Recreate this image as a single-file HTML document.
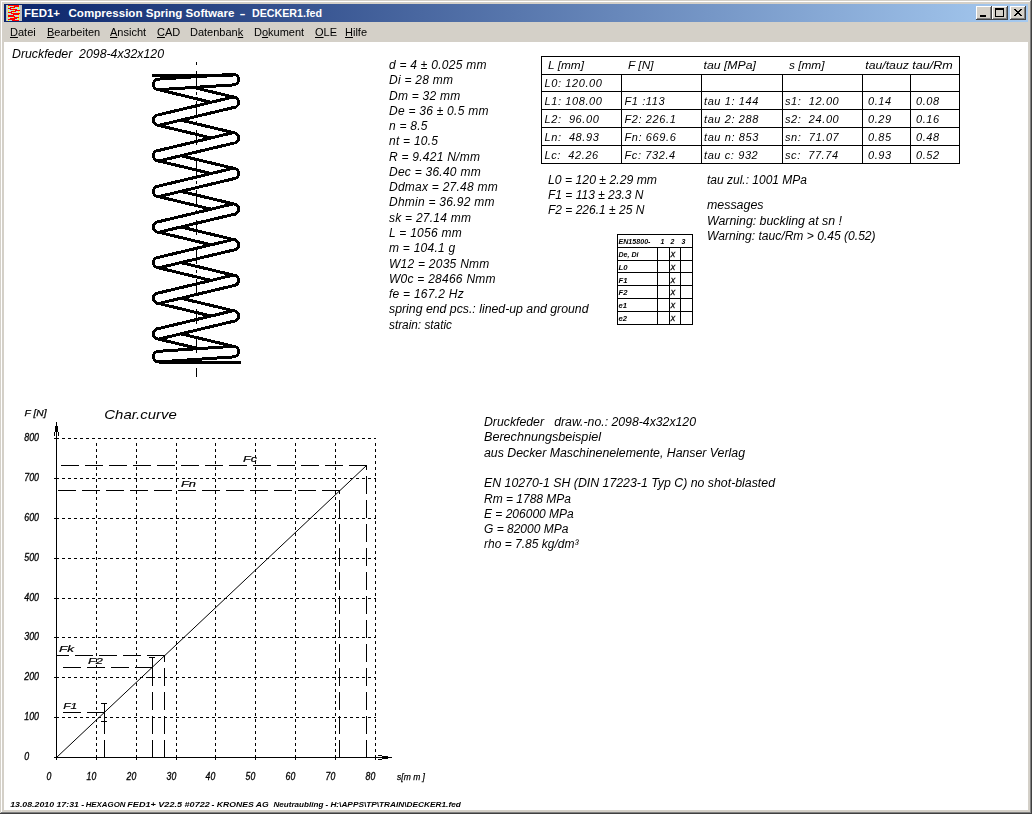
<!DOCTYPE html>
<html><head><meta charset="utf-8"><style>
html,body{margin:0;padding:0;width:1032px;height:814px;overflow:hidden;background:#d4d0c8;}
#win{position:absolute;left:0;top:0;width:1032px;height:814px;background:#d4d0c8;}
.f{position:absolute;}
#title{position:absolute;left:4px;top:4px;width:1024px;height:18px;background:linear-gradient(to right,#0a246a,#a6caf0);}
#ttext{position:absolute;left:24px;top:3px;font:bold 11px "Liberation Sans", sans-serif;color:#fff;white-space:pre;line-height:13px;letter-spacing:0.15px}
.btn{position:absolute;top:2px;width:16px;height:14px;background:#d4d0c8;box-sizing:border-box;
 box-shadow: inset -1px -1px #404040, inset 1px 1px #ffffff, inset -2px -2px #808080, inset 2px 2px #d4d0c8;}
#menu{position:absolute;left:4px;top:22px;width:1024px;height:20px;font:11px "Liberation Sans", sans-serif;color:#000;}
#menu span{position:absolute;top:4px;white-space:pre;line-height:13px;will-change:transform}
#menu u{text-decoration:underline;text-underline-offset:1px;}
#client{position:absolute;left:4px;top:42px;width:1024px;height:768px;background:#fff;}
#main text{font-family:"Liberation Sans", sans-serif;fill:#000;}
</style></head><body><div id="win">
<div class="f" style="left:0;top:0;width:1032px;height:1px;background:#d4d0c8"></div>
<div class="f" style="left:1px;top:1px;width:1030px;height:1px;background:#fff"></div>
<div class="f" style="left:1px;top:1px;width:1px;height:812px;background:#fff"></div>
<div class="f" style="left:1030px;top:1px;width:1px;height:812px;background:#808080"></div>
<div class="f" style="left:1031px;top:0;width:1px;height:814px;background:#404040"></div>
<div class="f" style="left:1px;top:812px;width:1030px;height:1px;background:#808080"></div>
<div class="f" style="left:0;top:813px;width:1032px;height:1px;background:#404040"></div>
<div id="title">
<svg width="16" height="16" viewBox="0 0 16 16" style="position:absolute;left:2px;top:1px" shape-rendering="crispEdges"><rect width="16" height="16" fill="#c0c0c0"/><rect x="1" width="1" height="16" fill="#c4d0d4"/><rect x="13" width="1" height="16" fill="#c4d0d4"/><rect x="2" y="0" width="11" height="1" fill="#ff0000"/><rect x="2" y="1" width="1" height="1" fill="#ffff00"/><rect x="3" y="1" width="4" height="1" fill="#b8dcdc"/><rect x="7" y="1" width="1" height="1" fill="#ffff00"/><rect x="8" y="1" width="5" height="1" fill="#ff0000"/><rect x="2" y="2" width="1" height="1" fill="#ffff00"/><rect x="3" y="2" width="1" height="1" fill="#b8dcdc"/><rect x="4" y="2" width="5" height="1" fill="#ff0000"/><rect x="9" y="2" width="3" height="1" fill="#b8dcdc"/><rect x="12" y="2" width="1" height="1" fill="#ffff00"/><rect x="2" y="3" width="3" height="1" fill="#ff0000"/><rect x="5" y="3" width="2" height="1" fill="#b8dcdc"/><rect x="7" y="3" width="1" height="1" fill="#ffff00"/><rect x="8" y="3" width="4" height="1" fill="#b8dcdc"/><rect x="12" y="3" width="1" height="1" fill="#ffff00"/><rect x="2" y="4" width="2" height="1" fill="#b8dcdc"/><rect x="4" y="4" width="7" height="1" fill="#ff0000"/><rect x="11" y="4" width="2" height="1" fill="#b8dcdc"/><rect x="2" y="5" width="1" height="1" fill="#ffff00"/><rect x="3" y="5" width="4" height="1" fill="#b8dcdc"/><rect x="7" y="5" width="1" height="1" fill="#ffff00"/><rect x="8" y="5" width="1" height="1" fill="#b8dcdc"/><rect x="9" y="5" width="5" height="1" fill="#ff0000"/><rect x="2" y="6" width="1" height="1" fill="#ffff00"/><rect x="3" y="6" width="2" height="1" fill="#b8dcdc"/><rect x="5" y="6" width="5" height="1" fill="#ff0000"/><rect x="10" y="6" width="2" height="1" fill="#b8dcdc"/><rect x="12" y="6" width="1" height="1" fill="#ffff00"/><rect x="2" y="7" width="4" height="1" fill="#ff0000"/><rect x="6" y="7" width="1" height="1" fill="#b8dcdc"/><rect x="7" y="7" width="1" height="1" fill="#ffff00"/><rect x="8" y="7" width="4" height="1" fill="#b8dcdc"/><rect x="12" y="7" width="1" height="1" fill="#ffff00"/><rect x="2" y="8" width="3" height="1" fill="#b8dcdc"/><rect x="5" y="8" width="9" height="1" fill="#ff0000"/><rect x="2" y="9" width="1" height="1" fill="#ffff00"/><rect x="3" y="9" width="4" height="1" fill="#b8dcdc"/><rect x="7" y="9" width="6" height="1" fill="#ff0000"/><rect x="2" y="10" width="6" height="1" fill="#ff0000"/><rect x="8" y="10" width="4" height="1" fill="#b8dcdc"/><rect x="12" y="10" width="1" height="1" fill="#ffff00"/><rect x="2" y="11" width="7" height="1" fill="#ff0000"/><rect x="9" y="11" width="3" height="1" fill="#b8dcdc"/><rect x="12" y="11" width="1" height="1" fill="#ffff00"/><rect x="2" y="12" width="1" height="1" fill="#ffff00"/><rect x="3" y="12" width="4" height="1" fill="#b8dcdc"/><rect x="7" y="12" width="1" height="1" fill="#ffff00"/><rect x="8" y="12" width="5" height="1" fill="#ff0000"/><rect x="2" y="13" width="2" height="1" fill="#b8dcdc"/><rect x="4" y="13" width="7" height="1" fill="#ff0000"/><rect x="11" y="13" width="1" height="1" fill="#b8dcdc"/><rect x="12" y="13" width="1" height="1" fill="#ffff00"/><rect x="2" y="14" width="7" height="1" fill="#ff0000"/><rect x="9" y="14" width="3" height="1" fill="#b8dcdc"/><rect x="12" y="14" width="1" height="1" fill="#ffff00"/><rect x="2" y="15" width="1" height="1" fill="#ffff00"/><rect x="3" y="15" width="3" height="1" fill="#b8dcdc"/><rect x="6" y="15" width="7" height="1" fill="#ff0000"/></svg>
<svg width="1024" height="18" style="position:absolute;left:0;top:0"><g font-family='"Liberation Sans", sans-serif' font-weight="bold" font-size="11" fill="#fff">
<text x="20" y="13" textLength="36" lengthAdjust="spacingAndGlyphs">FED1+</text>
<text x="64.5" y="13" textLength="166" lengthAdjust="spacingAndGlyphs">Compression Spring Software</text>
<text x="235.5" y="13" textLength="6" lengthAdjust="spacingAndGlyphs">-</text>
<text x="248" y="13" textLength="70" lengthAdjust="spacingAndGlyphs">DECKER1.fed</text></g></svg>
<div class="btn" style="left:972px"><div style="position:absolute;left:4px;top:9px;width:6px;height:2px;background:#000"></div></div>
<div class="btn" style="left:988px"><div style="position:absolute;left:3px;top:2px;width:9px;height:9px;box-sizing:border-box;border:1px solid #000;border-top-width:2px"></div></div>
<div class="btn" style="left:1006px"><svg width="16" height="14" style="position:absolute;left:0;top:0" shape-rendering="crispEdges"><path d="M4,3h2v1h1v1h2v-1h1v-1h2v1h-1v1h-1v1h-1v1h1v1h1v1h1v1h-2v-1h-1v-1h-2v1h-1v1h-2v-1h1v-1h1v-1h1v-1h-1v-1h-1v-1h-1z" fill="#000"/></svg></div>
</div>
<div id="menu">
<span style="left:6px"><u>D</u>atei</span>
<span style="left:43px"><u>B</u>earbeiten</span>
<span style="left:106px"><u>A</u>nsicht</span>
<span style="left:153px"><u>C</u>AD</span>
<span style="left:186px">Datenban<u>k</u></span>
<span style="left:250px">D<u>o</u>kument</span>
<span style="left:311px"><u>O</u>LE</span>
<span style="left:341px"><u>H</u>ilfe</span>
</div>
<div id="client"></div>
<svg id="main" width="1032" height="814" style="position:absolute;left:0;top:0;will-change:transform">
<path d="M158.70,79.10L233.30,97.00M158.70,89.70L233.30,107.60M158.70,114.81L233.30,132.62M158.70,125.41L233.30,143.22M158.70,150.43L233.30,168.24M158.70,161.03L233.30,178.84M158.70,186.05L233.30,203.86M158.70,196.65L233.30,214.46M158.70,221.67L233.30,239.48M158.70,232.27L233.30,250.08M158.70,257.29L233.30,275.10M158.70,267.89L233.30,285.70M158.70,292.91L233.30,310.72M158.70,303.51L233.30,321.32M158.70,328.53L233.30,346.30M158.70,339.13L233.30,356.90" fill="none" stroke="#000" stroke-width="3.0" shape-rendering="crispEdges"/>
<path d="M233.30,74.30L158.70,79.10L158.70,89.70L233.30,84.90Z" fill="#fff" shape-rendering="crispEdges"/>
<path d="M233.30,74.30L158.70,79.10M233.30,84.90L158.70,89.70" fill="none" stroke="#000" stroke-width="3.0" shape-rendering="crispEdges"/>
<path d="M233.30,97.00L158.70,114.81L158.70,125.41L233.30,107.60Z" fill="#fff" shape-rendering="crispEdges"/>
<path d="M233.30,97.00L158.70,114.81M233.30,107.60L158.70,125.41" fill="none" stroke="#000" stroke-width="3.0" shape-rendering="crispEdges"/>
<path d="M233.30,132.62L158.70,150.43L158.70,161.03L233.30,143.22Z" fill="#fff" shape-rendering="crispEdges"/>
<path d="M233.30,132.62L158.70,150.43M233.30,143.22L158.70,161.03" fill="none" stroke="#000" stroke-width="3.0" shape-rendering="crispEdges"/>
<path d="M233.30,168.24L158.70,186.05L158.70,196.65L233.30,178.84Z" fill="#fff" shape-rendering="crispEdges"/>
<path d="M233.30,168.24L158.70,186.05M233.30,178.84L158.70,196.65" fill="none" stroke="#000" stroke-width="3.0" shape-rendering="crispEdges"/>
<path d="M233.30,203.86L158.70,221.67L158.70,232.27L233.30,214.46Z" fill="#fff" shape-rendering="crispEdges"/>
<path d="M233.30,203.86L158.70,221.67M233.30,214.46L158.70,232.27" fill="none" stroke="#000" stroke-width="3.0" shape-rendering="crispEdges"/>
<path d="M233.30,239.48L158.70,257.29L158.70,267.89L233.30,250.08Z" fill="#fff" shape-rendering="crispEdges"/>
<path d="M233.30,239.48L158.70,257.29M233.30,250.08L158.70,267.89" fill="none" stroke="#000" stroke-width="3.0" shape-rendering="crispEdges"/>
<path d="M233.30,275.10L158.70,292.91L158.70,303.51L233.30,285.70Z" fill="#fff" shape-rendering="crispEdges"/>
<path d="M233.30,275.10L158.70,292.91M233.30,285.70L158.70,303.51" fill="none" stroke="#000" stroke-width="3.0" shape-rendering="crispEdges"/>
<path d="M233.30,310.72L158.70,328.53L158.70,339.13L233.30,321.32Z" fill="#fff" shape-rendering="crispEdges"/>
<path d="M233.30,310.72L158.70,328.53M233.30,321.32L158.70,339.13" fill="none" stroke="#000" stroke-width="3.0" shape-rendering="crispEdges"/>
<path d="M233.30,346.30L158.70,351.30L158.70,361.90L233.30,356.90Z" fill="#fff" shape-rendering="crispEdges"/>
<path d="M233.30,346.30L158.70,351.30M233.30,356.90L158.70,361.90" fill="none" stroke="#000" stroke-width="3.0" shape-rendering="crispEdges"/>
<path d="M233.30,74.30A5.3,5.3 0 0 1 233.30,84.90M158.70,79.10A5.3,5.3 0 0 0 158.70,89.70M233.30,97.00A5.3,5.3 0 0 1 233.30,107.60M158.70,114.81A5.3,5.3 0 0 0 158.70,125.41M233.30,132.62A5.3,5.3 0 0 1 233.30,143.22M158.70,150.43A5.3,5.3 0 0 0 158.70,161.03M233.30,168.24A5.3,5.3 0 0 1 233.30,178.84M158.70,186.05A5.3,5.3 0 0 0 158.70,196.65M233.30,203.86A5.3,5.3 0 0 1 233.30,214.46M158.70,221.67A5.3,5.3 0 0 0 158.70,232.27M233.30,239.48A5.3,5.3 0 0 1 233.30,250.08M158.70,257.29A5.3,5.3 0 0 0 158.70,267.89M233.30,275.10A5.3,5.3 0 0 1 233.30,285.70M158.70,292.91A5.3,5.3 0 0 0 158.70,303.51M233.30,310.72A5.3,5.3 0 0 1 233.30,321.32M158.70,328.53A5.3,5.3 0 0 0 158.70,339.13M233.30,346.30A5.3,5.3 0 0 1 233.30,356.90M158.70,351.30A5.3,5.3 0 0 0 158.70,361.90" fill="none" stroke="#000" stroke-width="3.0" shape-rendering="crispEdges"/>
<path d="M152,75.4H233.30 M158.70,362.0H241" fill="none" stroke="#000" stroke-width="3.0" shape-rendering="crispEdges"/>
<path d="M196.5,62V65 M196.5,71V86 M196.5,92V95 M196.5,101V116 M196.5,121V124 M196.5,130V145 M196.5,151V154 M196.5,160V175 M196.5,181V184 M196.5,190V205 M196.5,210V213 M196.5,220V235 M196.5,240V243 M196.5,249V264 M196.5,270V273 M196.5,279V294 M196.5,300V303 M196.5,309V324 M196.5,329V332 M196.5,338V353 M196.5,359V362 M196.5,368V377" stroke="#000" stroke-width="1" fill="none"/>
<path d="M56,717.5h3 M62,717.5h3 M68,717.5h3 M74,717.5h3 M80,717.5h3 M86,717.5h3 M92,717.5h3 M98,717.5h3 M104,717.5h3 M110,717.5h3 M116,717.5h3 M122,717.5h3 M128,717.5h3 M134,717.5h3 M140,717.5h3 M146,717.5h3 M152,717.5h3 M158,717.5h3 M164,717.5h3 M170,717.5h3 M176,717.5h3 M182,717.5h3 M188,717.5h3 M194,717.5h3 M200,717.5h3 M206,717.5h3 M212,717.5h3 M218,717.5h3 M224,717.5h3 M230,717.5h3 M236,717.5h3 M242,717.5h3 M248,717.5h3 M254,717.5h3 M260,717.5h3 M266,717.5h3 M272,717.5h3 M278,717.5h3 M284,717.5h3 M290,717.5h3 M296,717.5h3 M302,717.5h3 M308,717.5h3 M314,717.5h3 M320,717.5h3 M326,717.5h3 M332,717.5h3 M338,717.5h3 M344,717.5h3 M350,717.5h3 M356,717.5h3 M362,717.5h3 M368,717.5h3 M374,717.5h2 M54,717.5h2 M56,677.5h3 M62,677.5h3 M68,677.5h3 M74,677.5h3 M80,677.5h3 M86,677.5h3 M92,677.5h3 M98,677.5h3 M104,677.5h3 M110,677.5h3 M116,677.5h3 M122,677.5h3 M128,677.5h3 M134,677.5h3 M140,677.5h3 M146,677.5h3 M152,677.5h3 M158,677.5h3 M164,677.5h3 M170,677.5h3 M176,677.5h3 M182,677.5h3 M188,677.5h3 M194,677.5h3 M200,677.5h3 M206,677.5h3 M212,677.5h3 M218,677.5h3 M224,677.5h3 M230,677.5h3 M236,677.5h3 M242,677.5h3 M248,677.5h3 M254,677.5h3 M260,677.5h3 M266,677.5h3 M272,677.5h3 M278,677.5h3 M284,677.5h3 M290,677.5h3 M296,677.5h3 M302,677.5h3 M308,677.5h3 M314,677.5h3 M320,677.5h3 M326,677.5h3 M332,677.5h3 M338,677.5h3 M344,677.5h3 M350,677.5h3 M356,677.5h3 M362,677.5h3 M368,677.5h3 M374,677.5h2 M54,677.5h2 M56,637.5h3 M62,637.5h3 M68,637.5h3 M74,637.5h3 M80,637.5h3 M86,637.5h3 M92,637.5h3 M98,637.5h3 M104,637.5h3 M110,637.5h3 M116,637.5h3 M122,637.5h3 M128,637.5h3 M134,637.5h3 M140,637.5h3 M146,637.5h3 M152,637.5h3 M158,637.5h3 M164,637.5h3 M170,637.5h3 M176,637.5h3 M182,637.5h3 M188,637.5h3 M194,637.5h3 M200,637.5h3 M206,637.5h3 M212,637.5h3 M218,637.5h3 M224,637.5h3 M230,637.5h3 M236,637.5h3 M242,637.5h3 M248,637.5h3 M254,637.5h3 M260,637.5h3 M266,637.5h3 M272,637.5h3 M278,637.5h3 M284,637.5h3 M290,637.5h3 M296,637.5h3 M302,637.5h3 M308,637.5h3 M314,637.5h3 M320,637.5h3 M326,637.5h3 M332,637.5h3 M338,637.5h3 M344,637.5h3 M350,637.5h3 M356,637.5h3 M362,637.5h3 M368,637.5h3 M374,637.5h2 M54,637.5h2 M56,598.5h3 M62,598.5h3 M68,598.5h3 M74,598.5h3 M80,598.5h3 M86,598.5h3 M92,598.5h3 M98,598.5h3 M104,598.5h3 M110,598.5h3 M116,598.5h3 M122,598.5h3 M128,598.5h3 M134,598.5h3 M140,598.5h3 M146,598.5h3 M152,598.5h3 M158,598.5h3 M164,598.5h3 M170,598.5h3 M176,598.5h3 M182,598.5h3 M188,598.5h3 M194,598.5h3 M200,598.5h3 M206,598.5h3 M212,598.5h3 M218,598.5h3 M224,598.5h3 M230,598.5h3 M236,598.5h3 M242,598.5h3 M248,598.5h3 M254,598.5h3 M260,598.5h3 M266,598.5h3 M272,598.5h3 M278,598.5h3 M284,598.5h3 M290,598.5h3 M296,598.5h3 M302,598.5h3 M308,598.5h3 M314,598.5h3 M320,598.5h3 M326,598.5h3 M332,598.5h3 M338,598.5h3 M344,598.5h3 M350,598.5h3 M356,598.5h3 M362,598.5h3 M368,598.5h3 M374,598.5h2 M54,598.5h2 M56,558.5h3 M62,558.5h3 M68,558.5h3 M74,558.5h3 M80,558.5h3 M86,558.5h3 M92,558.5h3 M98,558.5h3 M104,558.5h3 M110,558.5h3 M116,558.5h3 M122,558.5h3 M128,558.5h3 M134,558.5h3 M140,558.5h3 M146,558.5h3 M152,558.5h3 M158,558.5h3 M164,558.5h3 M170,558.5h3 M176,558.5h3 M182,558.5h3 M188,558.5h3 M194,558.5h3 M200,558.5h3 M206,558.5h3 M212,558.5h3 M218,558.5h3 M224,558.5h3 M230,558.5h3 M236,558.5h3 M242,558.5h3 M248,558.5h3 M254,558.5h3 M260,558.5h3 M266,558.5h3 M272,558.5h3 M278,558.5h3 M284,558.5h3 M290,558.5h3 M296,558.5h3 M302,558.5h3 M308,558.5h3 M314,558.5h3 M320,558.5h3 M326,558.5h3 M332,558.5h3 M338,558.5h3 M344,558.5h3 M350,558.5h3 M356,558.5h3 M362,558.5h3 M368,558.5h3 M374,558.5h2 M54,558.5h2 M56,518.5h3 M62,518.5h3 M68,518.5h3 M74,518.5h3 M80,518.5h3 M86,518.5h3 M92,518.5h3 M98,518.5h3 M104,518.5h3 M110,518.5h3 M116,518.5h3 M122,518.5h3 M128,518.5h3 M134,518.5h3 M140,518.5h3 M146,518.5h3 M152,518.5h3 M158,518.5h3 M164,518.5h3 M170,518.5h3 M176,518.5h3 M182,518.5h3 M188,518.5h3 M194,518.5h3 M200,518.5h3 M206,518.5h3 M212,518.5h3 M218,518.5h3 M224,518.5h3 M230,518.5h3 M236,518.5h3 M242,518.5h3 M248,518.5h3 M254,518.5h3 M260,518.5h3 M266,518.5h3 M272,518.5h3 M278,518.5h3 M284,518.5h3 M290,518.5h3 M296,518.5h3 M302,518.5h3 M308,518.5h3 M314,518.5h3 M320,518.5h3 M326,518.5h3 M332,518.5h3 M338,518.5h3 M344,518.5h3 M350,518.5h3 M356,518.5h3 M362,518.5h3 M368,518.5h3 M374,518.5h2 M54,518.5h2 M56,478.5h3 M62,478.5h3 M68,478.5h3 M74,478.5h3 M80,478.5h3 M86,478.5h3 M92,478.5h3 M98,478.5h3 M104,478.5h3 M110,478.5h3 M116,478.5h3 M122,478.5h3 M128,478.5h3 M134,478.5h3 M140,478.5h3 M146,478.5h3 M152,478.5h3 M158,478.5h3 M164,478.5h3 M170,478.5h3 M176,478.5h3 M182,478.5h3 M188,478.5h3 M194,478.5h3 M200,478.5h3 M206,478.5h3 M212,478.5h3 M218,478.5h3 M224,478.5h3 M230,478.5h3 M236,478.5h3 M242,478.5h3 M248,478.5h3 M254,478.5h3 M260,478.5h3 M266,478.5h3 M272,478.5h3 M278,478.5h3 M284,478.5h3 M290,478.5h3 M296,478.5h3 M302,478.5h3 M308,478.5h3 M314,478.5h3 M320,478.5h3 M326,478.5h3 M332,478.5h3 M338,478.5h3 M344,478.5h3 M350,478.5h3 M356,478.5h3 M362,478.5h3 M368,478.5h3 M374,478.5h2 M54,478.5h2 M56,438.5h3 M62,438.5h3 M68,438.5h3 M74,438.5h3 M80,438.5h3 M86,438.5h3 M92,438.5h3 M98,438.5h3 M104,438.5h3 M110,438.5h3 M116,438.5h3 M122,438.5h3 M128,438.5h3 M134,438.5h3 M140,438.5h3 M146,438.5h3 M152,438.5h3 M158,438.5h3 M164,438.5h3 M170,438.5h3 M176,438.5h3 M182,438.5h3 M188,438.5h3 M194,438.5h3 M200,438.5h3 M206,438.5h3 M212,438.5h3 M218,438.5h3 M224,438.5h3 M230,438.5h3 M236,438.5h3 M242,438.5h3 M248,438.5h3 M254,438.5h3 M260,438.5h3 M266,438.5h3 M272,438.5h3 M278,438.5h3 M284,438.5h3 M290,438.5h3 M296,438.5h3 M302,438.5h3 M308,438.5h3 M314,438.5h3 M320,438.5h3 M326,438.5h3 M332,438.5h3 M338,438.5h3 M344,438.5h3 M350,438.5h3 M356,438.5h3 M362,438.5h3 M368,438.5h3 M374,438.5h2 M54,438.5h2 M96.5,755V758 M96.5,749V752 M96.5,743V746 M96.5,737V740 M96.5,731V734 M96.5,725V728 M96.5,719V722 M96.5,713V716 M96.5,707V710 M96.5,701V704 M96.5,695V698 M96.5,689V692 M96.5,683V686 M96.5,677V680 M96.5,671V674 M96.5,665V668 M96.5,659V662 M96.5,653V656 M96.5,647V650 M96.5,641V644 M96.5,635V638 M96.5,629V632 M96.5,623V626 M96.5,617V620 M96.5,611V614 M96.5,605V608 M96.5,599V602 M96.5,593V596 M96.5,587V590 M96.5,581V584 M96.5,575V578 M96.5,569V572 M96.5,563V566 M96.5,557V560 M96.5,551V554 M96.5,545V548 M96.5,539V542 M96.5,533V536 M96.5,527V530 M96.5,521V524 M96.5,515V518 M96.5,509V512 M96.5,503V506 M96.5,497V500 M96.5,491V494 M96.5,485V488 M96.5,479V482 M96.5,473V476 M96.5,467V470 M96.5,461V464 M96.5,455V458 M96.5,449V452 M96.5,443V446 M96.5,758V760 M136.5,755V758 M136.5,749V752 M136.5,743V746 M136.5,737V740 M136.5,731V734 M136.5,725V728 M136.5,719V722 M136.5,713V716 M136.5,707V710 M136.5,701V704 M136.5,695V698 M136.5,689V692 M136.5,683V686 M136.5,677V680 M136.5,671V674 M136.5,665V668 M136.5,659V662 M136.5,653V656 M136.5,647V650 M136.5,641V644 M136.5,635V638 M136.5,629V632 M136.5,623V626 M136.5,617V620 M136.5,611V614 M136.5,605V608 M136.5,599V602 M136.5,593V596 M136.5,587V590 M136.5,581V584 M136.5,575V578 M136.5,569V572 M136.5,563V566 M136.5,557V560 M136.5,551V554 M136.5,545V548 M136.5,539V542 M136.5,533V536 M136.5,527V530 M136.5,521V524 M136.5,515V518 M136.5,509V512 M136.5,503V506 M136.5,497V500 M136.5,491V494 M136.5,485V488 M136.5,479V482 M136.5,473V476 M136.5,467V470 M136.5,461V464 M136.5,455V458 M136.5,449V452 M136.5,443V446 M136.5,758V760 M176.5,755V758 M176.5,749V752 M176.5,743V746 M176.5,737V740 M176.5,731V734 M176.5,725V728 M176.5,719V722 M176.5,713V716 M176.5,707V710 M176.5,701V704 M176.5,695V698 M176.5,689V692 M176.5,683V686 M176.5,677V680 M176.5,671V674 M176.5,665V668 M176.5,659V662 M176.5,653V656 M176.5,647V650 M176.5,641V644 M176.5,635V638 M176.5,629V632 M176.5,623V626 M176.5,617V620 M176.5,611V614 M176.5,605V608 M176.5,599V602 M176.5,593V596 M176.5,587V590 M176.5,581V584 M176.5,575V578 M176.5,569V572 M176.5,563V566 M176.5,557V560 M176.5,551V554 M176.5,545V548 M176.5,539V542 M176.5,533V536 M176.5,527V530 M176.5,521V524 M176.5,515V518 M176.5,509V512 M176.5,503V506 M176.5,497V500 M176.5,491V494 M176.5,485V488 M176.5,479V482 M176.5,473V476 M176.5,467V470 M176.5,461V464 M176.5,455V458 M176.5,449V452 M176.5,443V446 M176.5,758V760 M215.5,755V758 M215.5,749V752 M215.5,743V746 M215.5,737V740 M215.5,731V734 M215.5,725V728 M215.5,719V722 M215.5,713V716 M215.5,707V710 M215.5,701V704 M215.5,695V698 M215.5,689V692 M215.5,683V686 M215.5,677V680 M215.5,671V674 M215.5,665V668 M215.5,659V662 M215.5,653V656 M215.5,647V650 M215.5,641V644 M215.5,635V638 M215.5,629V632 M215.5,623V626 M215.5,617V620 M215.5,611V614 M215.5,605V608 M215.5,599V602 M215.5,593V596 M215.5,587V590 M215.5,581V584 M215.5,575V578 M215.5,569V572 M215.5,563V566 M215.5,557V560 M215.5,551V554 M215.5,545V548 M215.5,539V542 M215.5,533V536 M215.5,527V530 M215.5,521V524 M215.5,515V518 M215.5,509V512 M215.5,503V506 M215.5,497V500 M215.5,491V494 M215.5,485V488 M215.5,479V482 M215.5,473V476 M215.5,467V470 M215.5,461V464 M215.5,455V458 M215.5,449V452 M215.5,443V446 M215.5,758V760 M255.5,755V758 M255.5,749V752 M255.5,743V746 M255.5,737V740 M255.5,731V734 M255.5,725V728 M255.5,719V722 M255.5,713V716 M255.5,707V710 M255.5,701V704 M255.5,695V698 M255.5,689V692 M255.5,683V686 M255.5,677V680 M255.5,671V674 M255.5,665V668 M255.5,659V662 M255.5,653V656 M255.5,647V650 M255.5,641V644 M255.5,635V638 M255.5,629V632 M255.5,623V626 M255.5,617V620 M255.5,611V614 M255.5,605V608 M255.5,599V602 M255.5,593V596 M255.5,587V590 M255.5,581V584 M255.5,575V578 M255.5,569V572 M255.5,563V566 M255.5,557V560 M255.5,551V554 M255.5,545V548 M255.5,539V542 M255.5,533V536 M255.5,527V530 M255.5,521V524 M255.5,515V518 M255.5,509V512 M255.5,503V506 M255.5,497V500 M255.5,491V494 M255.5,485V488 M255.5,479V482 M255.5,473V476 M255.5,467V470 M255.5,461V464 M255.5,455V458 M255.5,449V452 M255.5,443V446 M255.5,758V760 M295.5,755V758 M295.5,749V752 M295.5,743V746 M295.5,737V740 M295.5,731V734 M295.5,725V728 M295.5,719V722 M295.5,713V716 M295.5,707V710 M295.5,701V704 M295.5,695V698 M295.5,689V692 M295.5,683V686 M295.5,677V680 M295.5,671V674 M295.5,665V668 M295.5,659V662 M295.5,653V656 M295.5,647V650 M295.5,641V644 M295.5,635V638 M295.5,629V632 M295.5,623V626 M295.5,617V620 M295.5,611V614 M295.5,605V608 M295.5,599V602 M295.5,593V596 M295.5,587V590 M295.5,581V584 M295.5,575V578 M295.5,569V572 M295.5,563V566 M295.5,557V560 M295.5,551V554 M295.5,545V548 M295.5,539V542 M295.5,533V536 M295.5,527V530 M295.5,521V524 M295.5,515V518 M295.5,509V512 M295.5,503V506 M295.5,497V500 M295.5,491V494 M295.5,485V488 M295.5,479V482 M295.5,473V476 M295.5,467V470 M295.5,461V464 M295.5,455V458 M295.5,449V452 M295.5,443V446 M295.5,758V760 M335.5,755V758 M335.5,749V752 M335.5,743V746 M335.5,737V740 M335.5,731V734 M335.5,725V728 M335.5,719V722 M335.5,713V716 M335.5,707V710 M335.5,701V704 M335.5,695V698 M335.5,689V692 M335.5,683V686 M335.5,677V680 M335.5,671V674 M335.5,665V668 M335.5,659V662 M335.5,653V656 M335.5,647V650 M335.5,641V644 M335.5,635V638 M335.5,629V632 M335.5,623V626 M335.5,617V620 M335.5,611V614 M335.5,605V608 M335.5,599V602 M335.5,593V596 M335.5,587V590 M335.5,581V584 M335.5,575V578 M335.5,569V572 M335.5,563V566 M335.5,557V560 M335.5,551V554 M335.5,545V548 M335.5,539V542 M335.5,533V536 M335.5,527V530 M335.5,521V524 M335.5,515V518 M335.5,509V512 M335.5,503V506 M335.5,497V500 M335.5,491V494 M335.5,485V488 M335.5,479V482 M335.5,473V476 M335.5,467V470 M335.5,461V464 M335.5,455V458 M335.5,449V452 M335.5,443V446 M335.5,758V760 M375.5,755V758 M375.5,749V752 M375.5,743V746 M375.5,737V740 M375.5,731V734 M375.5,725V728 M375.5,719V722 M375.5,713V716 M375.5,707V710 M375.5,701V704 M375.5,695V698 M375.5,689V692 M375.5,683V686 M375.5,677V680 M375.5,671V674 M375.5,665V668 M375.5,659V662 M375.5,653V656 M375.5,647V650 M375.5,641V644 M375.5,635V638 M375.5,629V632 M375.5,623V626 M375.5,617V620 M375.5,611V614 M375.5,605V608 M375.5,599V602 M375.5,593V596 M375.5,587V590 M375.5,581V584 M375.5,575V578 M375.5,569V572 M375.5,563V566 M375.5,557V560 M375.5,551V554 M375.5,545V548 M375.5,539V542 M375.5,533V536 M375.5,527V530 M375.5,521V524 M375.5,515V518 M375.5,509V512 M375.5,503V506 M375.5,497V500 M375.5,491V494 M375.5,485V488 M375.5,479V482 M375.5,473V476 M375.5,467V470 M375.5,461V464 M375.5,455V458 M375.5,449V452 M375.5,443V446 M375.5,758V760" stroke="#000" stroke-width="1" fill="none"/>
<path d="M56.5,422V760 M54,757.5H392 M54.5,432V436 M58.5,432V436 M382,756.5" stroke="#000" stroke-width="1" fill="none"/>
<rect x="55" y="426" width="3" height="6" fill="#000"/>
<path d="M378,755.5h4 M378,759.5h4" stroke="#000" stroke-width="1"/>
<rect x="382" y="756" width="6" height="3" fill="#000"/>
<path d="M56.5,757.5L366.5,465.5" stroke="#000" stroke-width="1" fill="none"/>
<path d="M349,465.5H367 M325,465.5H343 M301,465.5H319 M277,465.5H295 M253,465.5H271 M229,465.5H247 M205,465.5H223 M181,465.5H199 M157,465.5H175 M133,465.5H151 M109,465.5H127 M85,465.5H103 M61,465.5H79 M322,490.5H340 M298,490.5H316 M274,490.5H292 M250,490.5H268 M226,490.5H244 M202,490.5H220 M178,490.5H196 M154,490.5H172 M130,490.5H148 M106,490.5H124 M82,490.5H100 M58,490.5H76 M147,655.5H165 M123,655.5H141 M99,655.5H117 M75,655.5H93 M56,655.5H69 M135,667.5H153 M111,667.5H129 M87,667.5H105 M63,667.5H81 M87,712.5H105 M63,712.5H81 M366.5,740V758 M366.5,716V734 M366.5,692V710 M366.5,668V686 M366.5,644V662 M366.5,620V638 M366.5,596V614 M366.5,572V590 M366.5,548V566 M366.5,524V542 M366.5,500V518 M366.5,476V494 M366.5,465V470 M339.5,740V758 M339.5,716V734 M339.5,692V710 M339.5,668V686 M339.5,644V662 M339.5,620V638 M339.5,596V614 M339.5,572V590 M339.5,548V566 M339.5,524V542 M339.5,500V518 M339.5,490V494 M164.5,740V758 M164.5,716V734 M164.5,692V710 M164.5,668V686 M164.5,655V662 M152.5,740V758 M152.5,716V734 M152.5,692V710 M152.5,668V686 M104.5,740V758 M104.5,716V734 M104.5,703V722 M101,703.5h6 M101,721.5h6 M152.5,657V678 M149,657.5h6 M149,677.5h6" stroke="#000" stroke-width="1" fill="none"/>
<text x="12" y="57.8" font-size="12" font-style="italic" font-weight="normal" textLength="152" lengthAdjust="spacingAndGlyphs">Druckfeder&#160; 2098-4x32x120</text>
<text x="389" y="68.9" font-size="12" font-style="italic" font-weight="normal" letter-spacing="0.25">d = 4 ± 0.025 mm</text>
<text x="389" y="84.2" font-size="12" font-style="italic" font-weight="normal" letter-spacing="0.25">Di = 28 mm</text>
<text x="389" y="99.5" font-size="12" font-style="italic" font-weight="normal" letter-spacing="0.25">Dm = 32 mm</text>
<text x="389" y="114.7" font-size="12" font-style="italic" font-weight="normal" letter-spacing="0.25">De = 36 ± 0.5 mm</text>
<text x="389" y="130.0" font-size="12" font-style="italic" font-weight="normal" letter-spacing="0.25">n = 8.5</text>
<text x="389" y="145.3" font-size="12" font-style="italic" font-weight="normal" letter-spacing="0.25">nt = 10.5</text>
<text x="389" y="160.6" font-size="12" font-style="italic" font-weight="normal" letter-spacing="0.25">R = 9.421 N/mm</text>
<text x="389" y="175.9" font-size="12" font-style="italic" font-weight="normal" letter-spacing="0.25">Dec = 36.40 mm</text>
<text x="389" y="191.1" font-size="12" font-style="italic" font-weight="normal" letter-spacing="0.25">Ddmax = 27.48 mm</text>
<text x="389" y="206.4" font-size="12" font-style="italic" font-weight="normal" letter-spacing="0.25">Dhmin = 36.92 mm</text>
<text x="389" y="221.7" font-size="12" font-style="italic" font-weight="normal" letter-spacing="0.25">sk = 27.14 mm</text>
<text x="389" y="237.0" font-size="12" font-style="italic" font-weight="normal" letter-spacing="0.25">L = 1056 mm</text>
<text x="389" y="252.3" font-size="12" font-style="italic" font-weight="normal" letter-spacing="0.25">m = 104.1 g</text>
<text x="389" y="267.5" font-size="12" font-style="italic" font-weight="normal" letter-spacing="0.25">W12 = 2035 Nmm</text>
<text x="389" y="282.8" font-size="12" font-style="italic" font-weight="normal" letter-spacing="0.25">W0c = 28466 Nmm</text>
<text x="389" y="298.1" font-size="12" font-style="italic" font-weight="normal" letter-spacing="0.25">fe = 167.2 Hz</text>
<text x="389" y="313.4" font-size="12" font-style="italic" font-weight="normal" textLength="199.5" lengthAdjust="spacingAndGlyphs">spring end pcs.: lined-up and ground</text>
<text x="389" y="328.7" font-size="12" font-style="italic" font-weight="normal" textLength="63" lengthAdjust="spacingAndGlyphs">strain: static</text>
<path d="M541,56.5H960 M541,74.5H960 M541,91.5H960 M541,109.5H960 M541,127.5H960 M541,145.5H960 M541,163.5H960 M541.5,56V164 M959.5,56V164 M621.5,74V164 M701.5,74V164 M782.5,74V164 M862.5,74V164 M910.5,74V164" stroke="#000" stroke-width="1" fill="none"/>
<text x="548" y="69" font-size="11" font-style="italic" font-weight="normal" textLength="36" lengthAdjust="spacingAndGlyphs">L [mm]</text>
<text x="628" y="69" font-size="11" font-style="italic" font-weight="normal" textLength="25.5" lengthAdjust="spacingAndGlyphs">F [N]</text>
<text x="703.5" y="69" font-size="11" font-style="italic" font-weight="normal" textLength="52.5" lengthAdjust="spacingAndGlyphs">tau [MPa]</text>
<text x="789" y="69" font-size="11" font-style="italic" font-weight="normal" textLength="35.5" lengthAdjust="spacingAndGlyphs">s [mm]</text>
<text x="865.3" y="69" font-size="11" font-style="italic" font-weight="normal" textLength="43.5" lengthAdjust="spacingAndGlyphs">tau/tauz</text>
<text x="912.3" y="69" font-size="11" font-style="italic" font-weight="normal" textLength="40.5" lengthAdjust="spacingAndGlyphs">tau/Rm</text>
<text x="544.5" y="87" font-size="11" font-style="italic" font-weight="normal" letter-spacing="0.6">L0: 120.00</text>
<text x="544.5" y="105" font-size="11" font-style="italic" font-weight="normal" letter-spacing="0.6">L1: 108.00</text>
<text x="624.5" y="105" font-size="11" font-style="italic" font-weight="normal" letter-spacing="0.6">F1 :113</text>
<text x="704" y="105" font-size="11" font-style="italic" font-weight="normal" letter-spacing="0.6">tau 1: 144</text>
<text x="785" y="105" font-size="11" font-style="italic" font-weight="normal" letter-spacing="0.6">s1:&#160; 12.00</text>
<text x="868" y="105" font-size="11" font-style="italic" font-weight="normal" letter-spacing="0.6">0.14</text>
<text x="916" y="105" font-size="11" font-style="italic" font-weight="normal" letter-spacing="0.6">0.08</text>
<text x="544.5" y="123" font-size="11" font-style="italic" font-weight="normal" letter-spacing="0.6">L2:&#160; 96.00</text>
<text x="624.5" y="123" font-size="11" font-style="italic" font-weight="normal" letter-spacing="0.6">F2: 226.1</text>
<text x="704" y="123" font-size="11" font-style="italic" font-weight="normal" letter-spacing="0.6">tau 2: 288</text>
<text x="785" y="123" font-size="11" font-style="italic" font-weight="normal" letter-spacing="0.6">s2:&#160; 24.00</text>
<text x="868" y="123" font-size="11" font-style="italic" font-weight="normal" letter-spacing="0.6">0.29</text>
<text x="916" y="123" font-size="11" font-style="italic" font-weight="normal" letter-spacing="0.6">0.16</text>
<text x="544.5" y="141" font-size="11" font-style="italic" font-weight="normal" letter-spacing="0.6">Ln:&#160; 48.93</text>
<text x="624.5" y="141" font-size="11" font-style="italic" font-weight="normal" letter-spacing="0.6">Fn: 669.6</text>
<text x="704" y="141" font-size="11" font-style="italic" font-weight="normal" letter-spacing="0.6">tau n: 853</text>
<text x="785" y="141" font-size="11" font-style="italic" font-weight="normal" letter-spacing="0.6">sn:&#160; 71.07</text>
<text x="868" y="141" font-size="11" font-style="italic" font-weight="normal" letter-spacing="0.6">0.85</text>
<text x="916" y="141" font-size="11" font-style="italic" font-weight="normal" letter-spacing="0.6">0.48</text>
<text x="544.5" y="159" font-size="11" font-style="italic" font-weight="normal" letter-spacing="0.6">Lc:&#160; 42.26</text>
<text x="624.5" y="159" font-size="11" font-style="italic" font-weight="normal" letter-spacing="0.6">Fc: 732.4</text>
<text x="704" y="159" font-size="11" font-style="italic" font-weight="normal" letter-spacing="0.6">tau c: 932</text>
<text x="785" y="159" font-size="11" font-style="italic" font-weight="normal" letter-spacing="0.6">sc:&#160; 77.74</text>
<text x="868" y="159" font-size="11" font-style="italic" font-weight="normal" letter-spacing="0.6">0.93</text>
<text x="916" y="159" font-size="11" font-style="italic" font-weight="normal" letter-spacing="0.6">0.52</text>
<text x="548" y="184.2" font-size="12" font-style="italic" font-weight="normal" textLength="109" lengthAdjust="spacingAndGlyphs">L0 = 120 ± 2.29 mm</text>
<text x="548" y="199" font-size="12" font-style="italic" font-weight="normal">F1 = 113 ± 23.3 N</text>
<text x="548" y="214" font-size="12" font-style="italic" font-weight="normal">F2 = 226.1 ± 25 N</text>
<text x="707" y="184.3" font-size="12" font-style="italic" font-weight="normal" textLength="100" lengthAdjust="spacingAndGlyphs">tau zul.: 1001 MPa</text>
<text x="707" y="208.9" font-size="12" font-style="italic" font-weight="normal" textLength="56.5" lengthAdjust="spacingAndGlyphs">messages</text>
<text x="707" y="224.7" font-size="12" font-style="italic" font-weight="normal" textLength="135" lengthAdjust="spacingAndGlyphs">Warning: buckling at sn !</text>
<text x="707" y="239.5" font-size="12" font-style="italic" font-weight="normal" textLength="168.6" lengthAdjust="spacingAndGlyphs">Warning: tauc/Rm &gt; 0.45 (0.52)</text>
<path d="M617,234.5H693 M617,247.5H693 M617,260.5H693 M617,272.5H693 M617,285.5H693 M617,298.5H693 M617,311.5H693 M617,324.5H693 M617.5,234V325 M692.5,234V325 M657.5,247V325 M669.5,247V325 M680.5,247V325" stroke="#000" stroke-width="1" fill="none"/>
<text x="618.5" y="244" font-size="7" font-style="italic" font-weight="bold" textLength="32" lengthAdjust="spacingAndGlyphs">EN15800-</text>
<text x="660.5" y="244" font-size="7" font-style="italic" font-weight="bold">1</text>
<text x="670.5" y="244" font-size="7" font-style="italic" font-weight="bold">2</text>
<text x="681.5" y="244" font-size="7" font-style="italic" font-weight="bold">3</text>
<text x="618.5" y="257" font-size="7" font-style="italic" font-weight="bold" textLength="20" lengthAdjust="spacingAndGlyphs">De, Di</text>
<text x="670.5" y="257" font-size="7" font-style="italic" font-weight="normal" stroke="#000" stroke-width="0.3">X</text>
<text x="618.5" y="270" font-size="7" font-style="italic" font-weight="bold" textLength="9" lengthAdjust="spacingAndGlyphs">L0</text>
<text x="670.5" y="270" font-size="7" font-style="italic" font-weight="normal" stroke="#000" stroke-width="0.3">X</text>
<text x="618.5" y="282.5" font-size="7" font-style="italic" font-weight="bold" textLength="9" lengthAdjust="spacingAndGlyphs">F1</text>
<text x="670.5" y="282.5" font-size="7" font-style="italic" font-weight="normal" stroke="#000" stroke-width="0.3">X</text>
<text x="618.5" y="295" font-size="7" font-style="italic" font-weight="bold" textLength="9" lengthAdjust="spacingAndGlyphs">F2</text>
<text x="670.5" y="295" font-size="7" font-style="italic" font-weight="normal" stroke="#000" stroke-width="0.3">X</text>
<text x="618.5" y="308" font-size="7" font-style="italic" font-weight="bold" textLength="8.5" lengthAdjust="spacingAndGlyphs">e1</text>
<text x="670.5" y="308" font-size="7" font-style="italic" font-weight="normal" stroke="#000" stroke-width="0.3">X</text>
<text x="618.5" y="321" font-size="7" font-style="italic" font-weight="bold" textLength="8.5" lengthAdjust="spacingAndGlyphs">e2</text>
<text x="670.5" y="321" font-size="7" font-style="italic" font-weight="normal" stroke="#000" stroke-width="0.3">X</text>
<text x="24.5" y="416" font-size="9.5" font-style="italic" font-weight="normal" textLength="22" lengthAdjust="spacingAndGlyphs" stroke="#000" stroke-width="0.25">F [N]</text>
<text x="104.3" y="418.9" font-size="13.6" font-style="italic" font-weight="normal" textLength="72.5" lengthAdjust="spacingAndGlyphs">Char.curve</text>
<text x="24.3" y="760.2" font-size="10" font-style="italic" font-weight="normal" textLength="4.9" lengthAdjust="spacingAndGlyphs" stroke="#000" stroke-width="0.3">0</text>
<text x="24.3" y="720.2" font-size="10" font-style="italic" font-weight="normal" textLength="14.700000000000001" lengthAdjust="spacingAndGlyphs" stroke="#000" stroke-width="0.3">100</text>
<text x="24.3" y="680.2" font-size="10" font-style="italic" font-weight="normal" textLength="14.700000000000001" lengthAdjust="spacingAndGlyphs" stroke="#000" stroke-width="0.3">200</text>
<text x="24.3" y="640.2" font-size="10" font-style="italic" font-weight="normal" textLength="14.700000000000001" lengthAdjust="spacingAndGlyphs" stroke="#000" stroke-width="0.3">300</text>
<text x="24.3" y="601.2" font-size="10" font-style="italic" font-weight="normal" textLength="14.700000000000001" lengthAdjust="spacingAndGlyphs" stroke="#000" stroke-width="0.3">400</text>
<text x="24.3" y="561.2" font-size="10" font-style="italic" font-weight="normal" textLength="14.700000000000001" lengthAdjust="spacingAndGlyphs" stroke="#000" stroke-width="0.3">500</text>
<text x="24.3" y="521.2" font-size="10" font-style="italic" font-weight="normal" textLength="14.700000000000001" lengthAdjust="spacingAndGlyphs" stroke="#000" stroke-width="0.3">600</text>
<text x="24.3" y="481.2" font-size="10" font-style="italic" font-weight="normal" textLength="14.700000000000001" lengthAdjust="spacingAndGlyphs" stroke="#000" stroke-width="0.3">700</text>
<text x="24.3" y="441.2" font-size="10" font-style="italic" font-weight="normal" textLength="14.700000000000001" lengthAdjust="spacingAndGlyphs" stroke="#000" stroke-width="0.3">800</text>
<text x="46.6" y="780.0" font-size="10" font-style="italic" font-weight="normal" textLength="4.8" lengthAdjust="spacingAndGlyphs" stroke="#000" stroke-width="0.3">0</text>
<text x="86.6" y="780.0" font-size="10" font-style="italic" font-weight="normal" textLength="9.6" lengthAdjust="spacingAndGlyphs" stroke="#000" stroke-width="0.3">10</text>
<text x="126.6" y="780.0" font-size="10" font-style="italic" font-weight="normal" textLength="9.6" lengthAdjust="spacingAndGlyphs" stroke="#000" stroke-width="0.3">20</text>
<text x="166.6" y="780.0" font-size="10" font-style="italic" font-weight="normal" textLength="9.6" lengthAdjust="spacingAndGlyphs" stroke="#000" stroke-width="0.3">30</text>
<text x="205.6" y="780.0" font-size="10" font-style="italic" font-weight="normal" textLength="9.6" lengthAdjust="spacingAndGlyphs" stroke="#000" stroke-width="0.3">40</text>
<text x="245.6" y="780.0" font-size="10" font-style="italic" font-weight="normal" textLength="9.6" lengthAdjust="spacingAndGlyphs" stroke="#000" stroke-width="0.3">50</text>
<text x="285.6" y="780.0" font-size="10" font-style="italic" font-weight="normal" textLength="9.6" lengthAdjust="spacingAndGlyphs" stroke="#000" stroke-width="0.3">60</text>
<text x="325.6" y="780.0" font-size="10" font-style="italic" font-weight="normal" textLength="9.6" lengthAdjust="spacingAndGlyphs" stroke="#000" stroke-width="0.3">70</text>
<text x="365.6" y="780.0" font-size="10" font-style="italic" font-weight="normal" textLength="9.6" lengthAdjust="spacingAndGlyphs" stroke="#000" stroke-width="0.3">80</text>
<text x="397" y="780" font-size="9.5" font-style="italic" font-weight="normal" textLength="28" lengthAdjust="spacingAndGlyphs" stroke="#000" stroke-width="0.25">s[m m ]</text>
<text x="243" y="462.2" font-size="9.5" font-style="italic" font-weight="normal" textLength="14" lengthAdjust="spacingAndGlyphs" stroke="#000" stroke-width="0.2">Fc</text>
<text x="181" y="487.2" font-size="9.5" font-style="italic" font-weight="normal" textLength="15" lengthAdjust="spacingAndGlyphs" stroke="#000" stroke-width="0.2">Fn</text>
<text x="59" y="652.2" font-size="9.5" font-style="italic" font-weight="normal" textLength="15" lengthAdjust="spacingAndGlyphs" stroke="#000" stroke-width="0.2">Fk</text>
<text x="88" y="664.2" font-size="9.5" font-style="italic" font-weight="normal" textLength="15" lengthAdjust="spacingAndGlyphs" stroke="#000" stroke-width="0.2">F2</text>
<text x="63.2" y="708.9" font-size="9.5" font-style="italic" font-weight="normal" textLength="14" lengthAdjust="spacingAndGlyphs" stroke="#000" stroke-width="0.2">F1</text>
<text x="484" y="426.2" font-size="12" font-style="italic" font-weight="normal" textLength="212" lengthAdjust="spacingAndGlyphs">Druckfeder&#160;&#160; draw.-no.: 2098-4x32x120</text>
<text x="484" y="440.8" font-size="12" font-style="italic" font-weight="normal" textLength="117" lengthAdjust="spacingAndGlyphs">Berechnungsbeispiel</text>
<text x="484" y="457.2" font-size="12" font-style="italic" font-weight="normal" textLength="261" lengthAdjust="spacingAndGlyphs">aus Decker Maschinenelemente, Hanser Verlag</text>
<text x="484" y="487.2" font-size="12" font-style="italic" font-weight="normal" textLength="291" lengthAdjust="spacingAndGlyphs">EN 10270-1 SH (DIN 17223-1 Typ C) no shot-blasted</text>
<text x="484" y="502.7" font-size="12" font-style="italic" font-weight="normal">Rm = 1788 MPa</text>
<text x="484" y="518.2" font-size="12" font-style="italic" font-weight="normal">E = 206000 MPa</text>
<text x="484" y="533.1" font-size="12" font-style="italic" font-weight="normal">G = 82000 MPa</text>
<text x="484" y="548" font-size="12" font-style="italic" font-weight="normal">rho = 7.85 kg/dm³</text>
<text x="10.2" y="807" font-size="7" font-style="italic" font-weight="bold" textLength="74.1" lengthAdjust="spacingAndGlyphs">13.08.2010 17:31 -</text>
<text x="85.7" y="807" font-size="7" font-style="italic" font-weight="bold" textLength="39.8" lengthAdjust="spacingAndGlyphs">HEXAGON</text>
<text x="127.3" y="807" font-size="7" font-style="italic" font-weight="bold" textLength="82.5" lengthAdjust="spacingAndGlyphs">FED1+ V22.5 #0722</text>
<text x="211.6" y="807" font-size="7" font-style="italic" font-weight="bold" textLength="57.2" lengthAdjust="spacingAndGlyphs">- KRONES AG</text>
<text x="273.4" y="807" font-size="7" font-style="italic" font-weight="bold" textLength="54.9" lengthAdjust="spacingAndGlyphs">Neutraubling -</text>
<text x="330.4" y="807" font-size="7" font-style="italic" font-weight="bold" textLength="130.4" lengthAdjust="spacingAndGlyphs">H:\APPS\TP\TRAIN\DECKER1.fed</text>
</svg>
</div></body></html>
